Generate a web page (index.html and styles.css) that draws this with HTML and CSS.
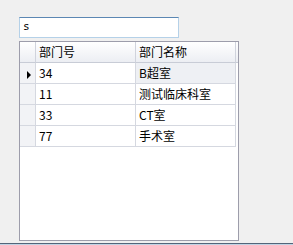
FILE: index.html
```html
<!DOCTYPE html>
<html lang="zh-CN">

<head>
  <meta charset="UTF-8" />
  <title>部门</title>
  <link rel="stylesheet" href="styles.css">
</head>

<body>

  <div class="form">
    <div class="search">s</div>

    <div class="grid">
      <table>
        <thead>
          <tr>
            <th class="rowhead"></th>
            <th class="col">部门号</th>
            <th class="col">部门名称</th>
            <th class="filler"></th>
          </tr>
        </thead>
        <tbody>
          <tr>
            <td class="rowhead"><span class="arrow"></span></td>
            <td>34</td>
            <td class="current">B超室</td>
            <td class="filler"></td>
          </tr>
          <tr>
            <td class="rowhead"></td>
            <td>11</td>
            <td>测试临床科室</td>
            <td class="filler"></td>
          </tr>
          <tr>
            <td class="rowhead"></td>
            <td>33</td>
            <td>CT室</td>
            <td class="filler"></td>
          </tr>
          <tr>
            <td class="rowhead"></td>
            <td>77</td>
            <td>手术室</td>
            <td class="filler"></td>
          </tr>
        </tbody>
      </table>
    </div>
  </div>

  <div class="bar"></div>

</body>

</html>
```

FILE: styles.css
```css
html,
body {
  margin: 0;
  padding: 0;
  background: #f0f0f0;
  height: 245px;
  overflow: hidden;
}

body {
  font-family: "Noto Sans CJK SC", "DejaVu Sans", sans-serif;
  font-size: 12px;
  color: #000;
}

.form {
  padding: 17px 0 0 19px;
  height: 224px;
}

.search {
  box-sizing: border-box;
  width: 160px;
  height: 21px;
  background: white;
  border: 1px solid #b5d1e8;
  border-top-color: #5b87b3;
  padding: 0 3px;
  line-height: 18px;
  font-family: "DejaVu Sans Mono", monospace;
  font-size: 11px;
}

.grid {
  box-sizing: border-box;
  margin-top: 3px;
  width: 220px;
  height: 200px;
  background: white;
  border: 1px solid #9d9dab;
}

table {
  border-collapse: separate;
  border-spacing: 0;
  width: 218px;
  table-layout: fixed;
}

th,
td {
  padding: 0 0 0 3px;
  height: 20px;
  line-height: 20px;
  text-align: left;
  font-weight: normal;
  white-space: nowrap;
  border-right: 1px solid #d5d8e0;
  border-bottom: 1px solid #d5d8e0;
}

th {
  background: linear-gradient(#ffffff, #eceef3);
  border-right-color: #d0d3dc;
  border-bottom-color: #c8ccd6;
}

.rowhead {
  width: 15px;
  padding: 0;
  background: #f2f3f6;
  text-align: center;
}

th.rowhead {
  background: linear-gradient(#ffffff, #eceef3);
}

.col,
td {
  width: 96px;
}

th.filler {
  width: auto;
  padding: 0;
  border-right: none;
}

td.filler {
  width: auto;
  padding: 0;
  border: none;
  background: white;
}

.current {
  background: #eef0f4;
}

.arrow {
  display: inline-block;
  width: 0;
  height: 0;
  border-top: 4px solid transparent;
  border-bottom: 4px solid transparent;
  border-left: 4px solid #000;
  vertical-align: middle;
  margin-left: 2px;
}

.bar {
  height: 1px;
  margin-top: 2px;
  border-top: 1px solid #53657a;
  background: #c2d3e4;
}
```
